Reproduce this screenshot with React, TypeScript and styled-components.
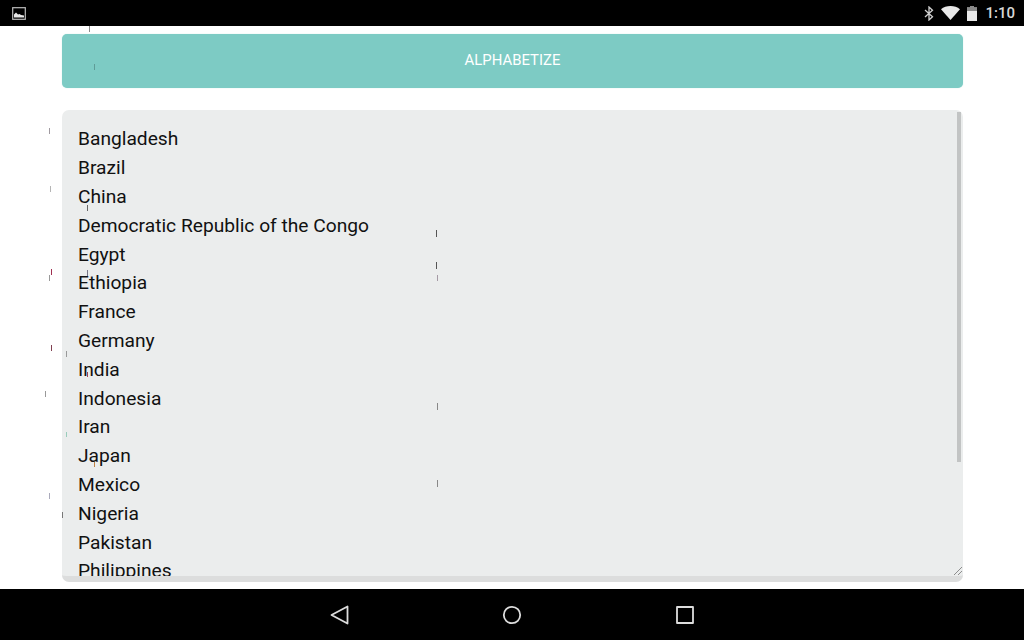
import React from 'react';
import styled, { createGlobalStyle } from 'styled-components';

const countries = [
  'Bangladesh',
  'Brazil',
  'China',
  'Democratic Republic of the Congo',
  'Egypt',
  'Ethiopia',
  'France',
  'Germany',
  'India',
  'Indonesia',
  'Iran',
  'Japan',
  'Mexico',
  'Nigeria',
  'Pakistan',
  'Philippines',
];

// stray render ticks that sit over the page in the capture
const ticks = [
  { x: 89, y: 26, h: 6, c: '#8a8a8a' },
  { x: 94, y: 64, h: 6, c: '#5f9c97' },
  { x: 49, y: 128, h: 6, c: '#a09aa0' },
  { x: 50, y: 186, h: 6, c: '#b5b5b5' },
  { x: 87, y: 205, h: 6, c: '#666' },
  { x: 51, y: 269, h: 6, c: '#a03050' },
  { x: 49, y: 275, h: 6, c: '#999' },
  { x: 87, y: 270, h: 6, c: '#778' },
  { x: 436, y: 230, h: 7, c: '#555' },
  { x: 436, y: 262, h: 7, c: '#555' },
  { x: 437, y: 275, h: 6, c: '#a59aa5' },
  { x: 51, y: 345, h: 6, c: '#804050' },
  { x: 66, y: 351, h: 6, c: '#999' },
  { x: 87, y: 372, h: 5, c: '#a04050' },
  { x: 45, y: 391, h: 6, c: '#999' },
  { x: 437, y: 403, h: 7, c: '#888' },
  { x: 66, y: 432, h: 5, c: '#9cb' },
  { x: 94, y: 462, h: 5, c: '#c08040' },
  { x: 437, y: 480, h: 7, c: '#888' },
  { x: 49, y: 493, h: 6, c: '#aab' },
  { x: 62, y: 512, h: 6, c: '#777' },
];

const GlobalStyle = createGlobalStyle`
  html, body {
    margin: 0;
    padding: 0;
    background: #fff;
  }
  body {
    font-family: Roboto, "Liberation Sans", sans-serif;
  }
`;

const Screen = styled.div`
  position: relative;
  width: 1024px;
  height: 640px;
  display: flex;
  flex-direction: column;
  overflow: hidden;
`;

const StatusBar = styled.div`
  height: 26px;
  flex: none;
  background: #000;
  display: flex;
  align-items: center;
  justify-content: space-between;
  padding: 0 9px 0 12px;
  color: #d8d8d8;
`;

const StatusIcons = styled.div`
  display: flex;
  align-items: center;
  gap: 7px;
`;

const Clock = styled.span`
  font-size: 15px;
  font-weight: 500;
  margin-left: 1px;
`;

const Content = styled.main`
  flex: 1;
  min-height: 0;
  display: flex;
  flex-direction: column;
  gap: 22px;
  padding: 8px 61px 7px 62px;
`;

const SortButton = styled.button`
  height: 54px;
  flex: none;
  border: 0;
  border-radius: 5px;
  padding: 0 0 3px;
  background: #7dcbc4;
  color: #fff;
  font-family: inherit;
  font-size: 14.9px;
  box-shadow: 0 0 1px rgba(125, 203, 196, 0.6);
`;

const ListBox = styled.div`
  position: relative;
  flex: 1;
  min-height: 0;
  border-radius: 7px;
  border-bottom: 6px solid #dcdddd;
  background: #ebeded;
  overflow: hidden;
`;

const ListText = styled.div`
  height: 100%;
  padding: 15.4px 16px 0;
  overflow: hidden;
  color: #111;
  font-size: 19.2px;
  line-height: 28.8px;
`;

const Country = styled.div`
  white-space: nowrap;
`;

const ScrollThumb = styled.div`
  position: absolute;
  top: 2px;
  right: 2px;
  width: 4px;
  height: 350px;
  background: #c2c4c4;
`;

const ResizeGrip = styled.svg`
  position: absolute;
  right: 0;
  bottom: 0;
  width: 10px;
  height: 10px;
`;

const NavBar = styled.nav`
  height: 51px;
  flex: none;
  background: #000;
  display: flex;
  align-items: center;
  justify-content: center;
  gap: 152.5px;
`;

const NavIcon = styled.svg`
  width: 20px;
  height: 20px;
  fill: none;
  stroke: #dcdcdc;
  stroke-width: 1.8;
  stroke-linejoin: round;
`;

const Tick = styled.i<{ $x: number; $y: number; $h: number; $c: string }>`
  position: absolute;
  left: ${({ $x }) => $x}px;
  top: ${({ $y }) => $y}px;
  width: 1px;
  height: ${({ $h }) => $h}px;
  background: ${({ $c }) => $c};
`;

const App: React.FC = () => (
  <Screen>
    <GlobalStyle />
    <StatusBar>
      <svg width="14" height="13" viewBox="0 0 14 13">
        <rect x="0.7" y="0.7" width="12.6" height="11.6" fill="none" stroke="#bdbdbd" strokeWidth="1.2" />
        <path d="M2 10.5V7.5L4 5.5 6 7.5 7.5 7 9 8 12 8.5V10.5Z" fill="#e8e8e8" />
      </svg>
      <StatusIcons>
        <svg width="10" height="15" viewBox="0 0 10 15">
          <path d="M1 4l7.5 6.8L5 14V1l3.5 3.2L1 11" fill="none" stroke="#d0d0d0" strokeWidth="1.3" />
        </svg>
        <svg width="19" height="14" viewBox="0 0 19 14">
          <path d="M0 3.2C2.6 1.2 5.8 0 9.5 0S16.4 1.2 19 3.2L9.5 14Z" fill="#e8e8e8" />
        </svg>
        <svg width="10" height="15" viewBox="0 0 10 15">
          <path d="M3 0h4v1.5h3V15H0V1.5h3Z" fill="#e8e8e8" />
          <path d="M0 1.5h3V0h4v1.5h3V5H0Z" fill="#8a8a8a" />
        </svg>
        <Clock>1:10</Clock>
      </StatusIcons>
    </StatusBar>

    <Content>
      <SortButton>ALPHABETIZE</SortButton>
      <ListBox>
        <ListText>
          {countries.map((name) => (
            <Country key={name}>{name}</Country>
          ))}
        </ListText>
        <ScrollThumb />
        <ResizeGrip viewBox="0 0 10 10">
          <path d="M1 9L9 1M5 9L9 5" stroke="#8d8d8d" strokeWidth="1" fill="none" />
        </ResizeGrip>
      </ListBox>
    </Content>

    <NavBar>
      <NavIcon viewBox="0 0 20 20">
        <path d="M17.5 1.5V18.5L1.5 10Z" />
      </NavIcon>
      <NavIcon viewBox="0 0 20 20">
        <circle cx="10" cy="10" r="8.2" />
      </NavIcon>
      <NavIcon viewBox="0 0 20 20">
        <rect x="2" y="2" width="16" height="16" />
      </NavIcon>
    </NavBar>

    {ticks.map((t) => (
      <Tick key={`${t.x}-${t.y}`} $x={t.x} $y={t.y} $h={t.h} $c={t.c} />
    ))}
  </Screen>
);

export default App;
